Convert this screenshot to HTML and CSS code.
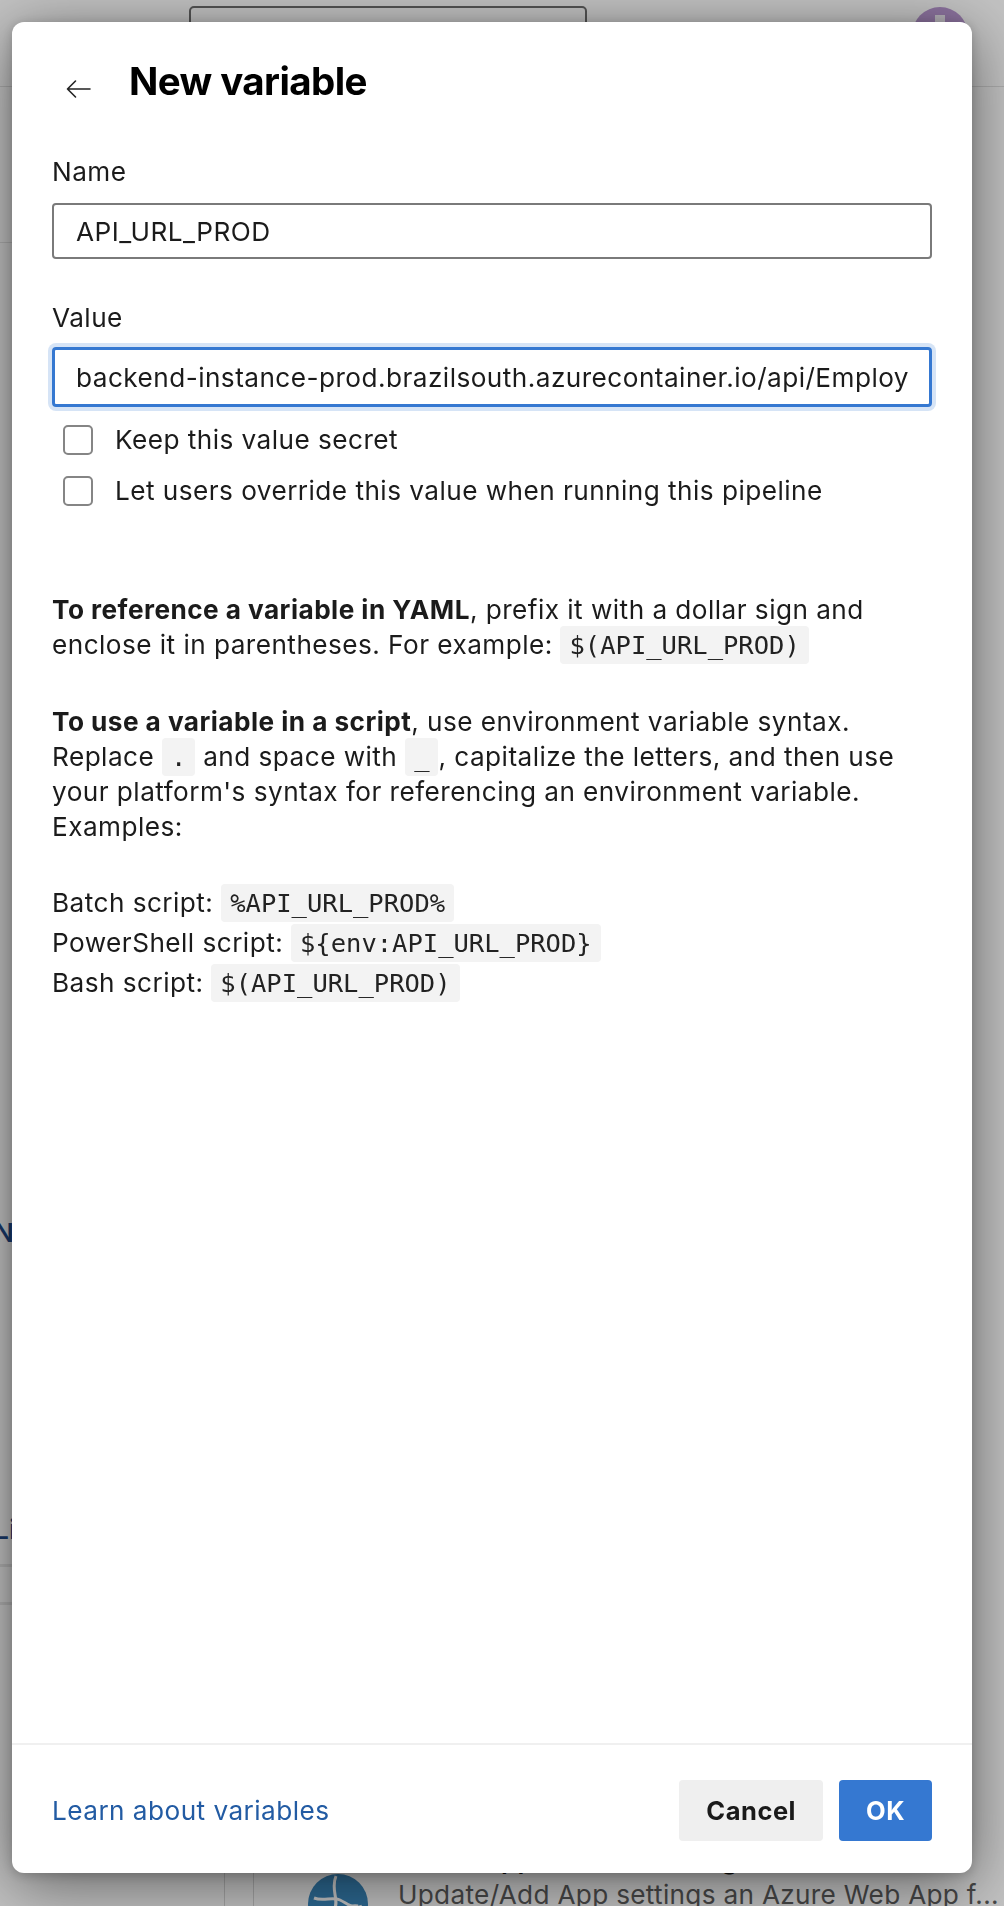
FILE: index.html
```html
<!DOCTYPE html>
<html lang="en">
<head>
<meta charset="utf-8">
<title>New variable</title>
<link rel="stylesheet" href="styles.css">
</head>
<body>
<div class="page">
  <header class="topbar">
    <div class="search"></div>
    <div class="avatar"><span class="avatar-letter"></span></div>
  </header>
  <div class="main">
    <aside class="sidenav">
      <div class="nav-sep"></div>
      <div class="nav-link nav-name">Name</div>
      <div class="nav-link nav-l">Library</div>
      <div class="nav-sep2"></div>
      <div class="nav-sep3"></div>
    </aside>
    <section class="content">
      <div class="panel">
        <div class="task">
          <div class="task-icon">
            <svg viewBox="0 0 64 64" width="64" height="64">
              <circle cx="32" cy="32" r="30" fill="#3a89bf"/>
              <path d="M8 26c10 4 18-2 26 2s14 10 22 6" stroke="#fff" stroke-width="3" fill="none"/>
              <path d="M10 44c8-2 14 4 22 0s10-12 20-10" stroke="#fff" stroke-width="3" fill="none"/>
              <path d="M30 4c-6 14 4 24-2 34s2 16 4 22" stroke="#fff" stroke-width="3" fill="none"/>
            </svg>
          </div>
          <div class="task-text">
            <div class="task-title">Azure App Service Settings</div>
            <div class="task-desc">Update/Add App settings an Azure Web App f...</div>
          </div>
        </div>
      </div>
    </section>
  </div>
</div>
<div class="overlay"></div>

<div class="dialog" role="dialog" aria-label="New variable">
  <div class="dlg-header">
    <svg class="back" viewBox="0 0 26 20" width="26" height="20" aria-hidden="true">
      <path d="M25 10H2.5M10.5 2L2.5 10l8 8" fill="none" stroke="#222" stroke-width="1.6" stroke-linecap="round" stroke-linejoin="round"/>
    </svg>
    <h1 class="title">New variable</h1>
  </div>

  <div class="dlg-body">
    <div class="label label-name">Name</div>
    <div class="input">API_URL_PROD</div>

    <div class="label label-value">Value</div>
    <div class="input input-focus"><span class="input-clip">backend-instance-prod.brazilsouth.azurecontainer.io/api/Employees</span></div>

    <div class="checks">
      <div class="check-row"><span class="box"></span><span>Keep this value secret</span></div>
      <div class="check-row"><span class="box"></span><span>Let users override this value when running this pipeline</span></div>
    </div>

    <p class="para para1"><b>To reference a variable in YAML</b>, prefix it with a dollar sign and<br>enclose it in parentheses. For example: <code>$(API_URL_PROD)</code></p>

    <p class="para para2"><b>To use a variable in a script</b>, use environment variable syntax.<br>Replace <code>.</code> and space with <code>_</code>, capitalize the letters, and then use<br>your platform's syntax for referencing an environment variable.<br>Examples:</p>

    <div class="examples">
      <div class="ex-row">Batch script: <code>%API_URL_PROD%</code></div>
      <div class="ex-row">PowerShell script: <code>${env:API_URL_PROD}</code></div>
      <div class="ex-row">Bash script: <code>$(API_URL_PROD)</code></div>
    </div>
  </div>

  <div class="dlg-footer">
    <a class="learn" href="#">Learn about variables</a>
    <div class="buttons">
      <button class="btn btn-cancel">Cancel</button>
      <button class="btn btn-ok">OK</button>
    </div>
  </div>
</div>
</body>
</html>
```
FILE: styles.css
```css
* { box-sizing: border-box; }
html, body { margin: 0; padding: 0; height: 1906px; overflow: hidden; }
body {
  background: #ffffff;
  font-family: "Inter", "Liberation Sans", sans-serif;
  color: #1b1b1b;
  font-size: 26.2px;
  letter-spacing: 0.45px;
  line-height: 35px;
}

/* ---------- background page ---------- */
.page { height: 1906px; display: flex; flex-direction: column; }
.topbar {
  height: 87px;
  border-bottom: 1px solid #e2e2e2;
  display: flex;
  justify-content: space-between;
  align-items: flex-start;
  padding: 6px 36px 0 189px;
}
.search { width: 398px; height: 56px; border: 2px solid #6e6e6e; border-radius: 5px; }
.avatar {
  width: 56px; height: 56px; border-radius: 50%;
  background: #b896d0; margin-top: 1px;
  display: flex; justify-content: center;
}
.avatar-letter { width: 10px; height: 40px; background: #efeaf3; margin-top: 8px; }

.main { flex: 1; display: flex; min-height: 0; }
.sidenav { width: 225px; border-right: 1px solid #d8d8d8; display: flex; flex-direction: column; }
.nav-sep { margin-top: 155px; border-top: 1px solid #e4e4e4; }
.nav-link { color: #1f4b8c; font-weight: 600; margin-left: -6px; white-space: nowrap; }
.nav-name { margin-top: 972px; }
.nav-l { margin-top: 262px; }
.nav-sep2 { margin-top: 17px; border-top: 3px solid #e8e8e8; }
.nav-sep3 { margin-top: 35px; border-top: 3px solid #e8e8e8; }

.content { flex: 1; display: flex; }
.panel { margin-left: 28px; border-left: 1px solid #d8d8d8; flex: 1; display: flex; flex-direction: column; justify-content: flex-end; }
.task { display: flex; gap: 28px; padding-left: 52px; margin-bottom: -30px; letter-spacing: 0.3px; }
.task-icon { margin-top: 30px; width: 64px; height: 64px; flex: none; }
.task-title { font-weight: 600; color: #111; }
.task-desc { color: #5e5e5e; white-space: nowrap; }

.overlay { position: fixed; inset: 0; background: rgba(0, 0, 0, 0.24); }

/* ---------- dialog ---------- */
.dialog {
  position: fixed;
  left: 12px; top: 22px;
  width: 960px; height: 1851px;
  background: #fff;
  border-radius: 12px;
  box-shadow: 0 12px 64px rgba(0, 0, 0, 0.5), 0 2px 12px rgba(0, 0, 0, 0.2);
  display: flex;
  flex-direction: column;
}
.dlg-header {
  display: flex;
  align-items: center;
  padding: 40px 40px 0 53px;
  height: 78px;
}
.back { flex: none; margin-right: 38px; margin-top: 16px; }
.title {
  margin: 0;
  font-size: 38.5px;
  line-height: 38px;
  font-weight: 700;
  letter-spacing: -0.6px;
  color: #000;
}

.dlg-body { flex: 1; padding: 0 40px; }
.label { line-height: 35px; }
.label-name { margin-top: 54px; }
.label-value { margin-top: 41px; }

.input {
  margin-top: 14px;
  height: 56px;
  border: 2px solid #7a7a7a;
  border-radius: 4px;
  padding: 0 22px;
  display: flex;
  align-items: center;
  white-space: nowrap;
}
.input-focus {
  margin-top: 12px;
  height: 60px;
  border: 3px solid #3578d1;
  box-shadow: 0 0 0 4px #d6e4f6;
  padding: 0 21px;
}
.input-clip { display: block; overflow: hidden; flex: 1; }

.checks { margin-top: 7px; padding-left: 11px; }
.check-row { height: 51px; display: flex; align-items: center; gap: 22px; }
.box { width: 30px; height: 30px; border: 2px solid #858585; border-radius: 5px; flex: none; }

.para { margin: 0; }
.para1 { margin-top: 76px; }
.para2 { margin-top: 42px; }
b { font-weight: 700; }

code {
  font-family: "DejaVu Sans Mono", "Liberation Mono", monospace;
  font-size: 25.5px;
  letter-spacing: 0;
  line-height: 1;
  background: #f3f3f3;
  border-radius: 4px;
  padding: 3.6px 9px;
  color: #222;
}

.examples { margin-top: 39px; }
.ex-row { line-height: 40px; }

.dlg-footer {
  border-top: 2px solid #f0f0f0;
  height: 130px;
  padding: 35px 40px 32px 40px;
  display: flex;
  justify-content: space-between;
  align-items: center;
}
.learn { color: #225ba3; text-decoration: none; }
.buttons { display: flex; gap: 16px; }
.btn {
  height: 61px;
  border: none;
  border-radius: 4px;
  padding: 0 27px;
  font-family: inherit;
  font-size: 25.5px;
  letter-spacing: 0.5px;
  font-weight: 700;
}
.btn-cancel { background: #efefef; color: #1a1a1a; }
.btn-ok { background: #3578d1; color: #fff; }
```
